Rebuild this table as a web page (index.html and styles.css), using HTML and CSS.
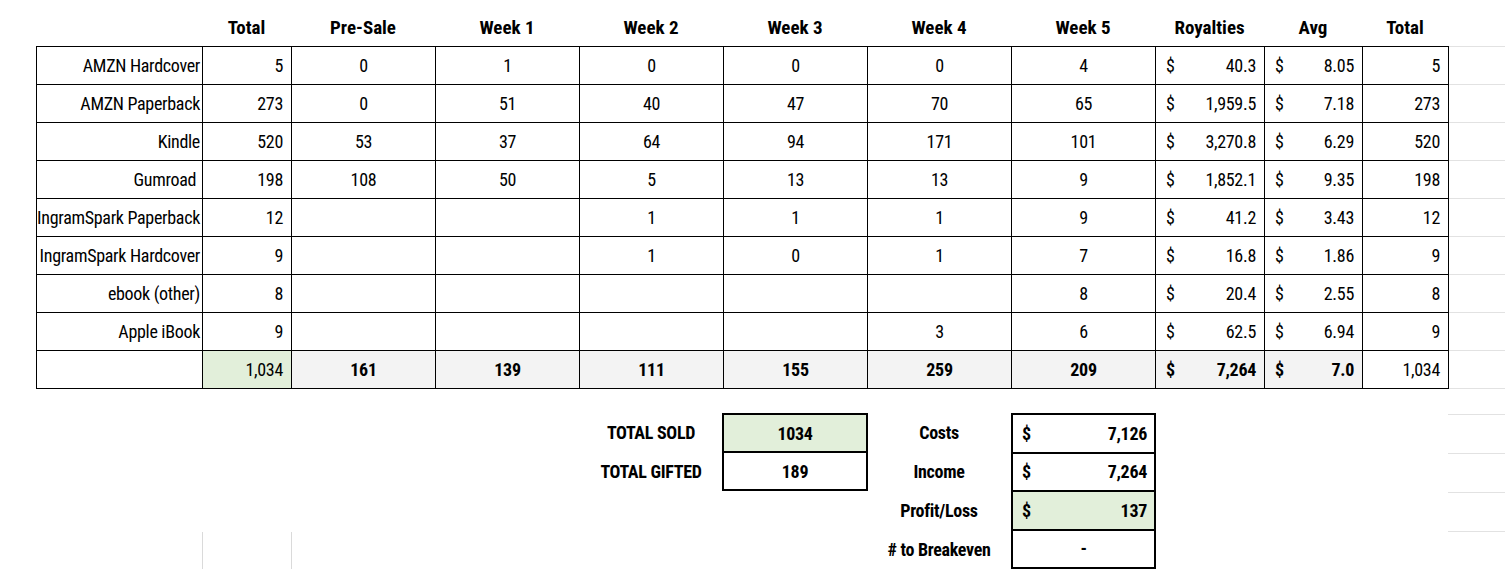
FILE: index.html
```html
<!DOCTYPE html>
<html>
<head>
<meta charset="utf-8">
<title>Book Sales</title>
<link rel="stylesheet" href="styles.css">
</head>
<body>
<div class="sheet">
  <div class="head">
    <div></div>
    <div>Total</div>
    <div>Pre-Sale</div>
    <div>Week 1</div>
    <div>Week 2</div>
    <div>Week 3</div>
    <div>Week 4</div>
    <div>Week 5</div>
    <div>Royalties</div>
    <div>Avg</div>
    <div>Total</div>
  </div>

  <div class="main">
    <div class="grid">
      <div class="c lbl">AMZN Hardcover</div><div class="c num">5</div><div class="c ctr">0</div><div class="c ctr">1</div><div class="c ctr">0</div><div class="c ctr">0</div><div class="c ctr">0</div><div class="c ctr">4</div><div class="c money"><span>$</span><span>40.3</span></div><div class="c money"><span>$</span><span>8.05</span></div><div class="c num">5</div>

      <div class="c lbl">AMZN Paperback</div><div class="c num">273</div><div class="c ctr">0</div><div class="c ctr">51</div><div class="c ctr">40</div><div class="c ctr">47</div><div class="c ctr">70</div><div class="c ctr">65</div><div class="c money"><span>$</span><span>1,959.5</span></div><div class="c money"><span>$</span><span>7.18</span></div><div class="c num">273</div>

      <div class="c lbl">Kindle</div><div class="c num">520</div><div class="c ctr">53</div><div class="c ctr">37</div><div class="c ctr">64</div><div class="c ctr">94</div><div class="c ctr">171</div><div class="c ctr">101</div><div class="c money"><span>$</span><span>3,270.8</span></div><div class="c money"><span>$</span><span>6.29</span></div><div class="c num">520</div>

      <div class="c lbl">Gumroad&nbsp;</div><div class="c num">198</div><div class="c ctr">108</div><div class="c ctr">50</div><div class="c ctr">5</div><div class="c ctr">13</div><div class="c ctr">13</div><div class="c ctr">9</div><div class="c money"><span>$</span><span>1,852.1</span></div><div class="c money"><span>$</span><span>9.35</span></div><div class="c num">198</div>

      <div class="c lbl">IngramSpark Paperback</div><div class="c num">12</div><div class="c ctr"></div><div class="c ctr"></div><div class="c ctr">1</div><div class="c ctr">1</div><div class="c ctr">1</div><div class="c ctr">9</div><div class="c money"><span>$</span><span>41.2</span></div><div class="c money"><span>$</span><span>3.43</span></div><div class="c num">12</div>

      <div class="c lbl">IngramSpark Hardcover</div><div class="c num">9</div><div class="c ctr"></div><div class="c ctr"></div><div class="c ctr">1</div><div class="c ctr">0</div><div class="c ctr">1</div><div class="c ctr">7</div><div class="c money"><span>$</span><span>16.8</span></div><div class="c money"><span>$</span><span>1.86</span></div><div class="c num">9</div>

      <div class="c lbl">ebook (other)</div><div class="c num">8</div><div class="c ctr"></div><div class="c ctr"></div><div class="c ctr"></div><div class="c ctr"></div><div class="c ctr"></div><div class="c ctr">8</div><div class="c money"><span>$</span><span>20.4</span></div><div class="c money"><span>$</span><span>2.55</span></div><div class="c num">8</div>

      <div class="c lbl">Apple iBook</div><div class="c num">9</div><div class="c ctr"></div><div class="c ctr"></div><div class="c ctr"></div><div class="c ctr"></div><div class="c ctr">3</div><div class="c ctr">6</div><div class="c money"><span>$</span><span>62.5</span></div><div class="c money"><span>$</span><span>6.94</span></div><div class="c num">9</div>

      <div class="c lbl"></div><div class="c num green">1,034</div><div class="c ctr sum">161</div><div class="c ctr sum">139</div><div class="c ctr sum">111</div><div class="c ctr sum">155</div><div class="c ctr sum">259</div><div class="c ctr sum">209</div><div class="c money sum"><span>$</span><span>7,264</span></div><div class="c money sum"><span>$</span><span>7.0</span></div><div class="c num">1,034</div>
    </div>
    <div class="rest"></div>
  </div>

  <div class="lower">
    <div class="blabel sold">TOTAL SOLD</div>
    <div class="blabel gifted">TOTAL GIFTED</div>
    <div class="box box-a">
      <div class="bc ctr green">1034</div>
      <div class="bc ctr">189</div>
    </div>
    <div class="blabel costs">Costs</div>
    <div class="blabel income">Income</div>
    <div class="blabel profit">Profit/Loss</div>
    <div class="blabel breakeven"># to Breakeven</div>
    <div class="box box-b">
      <div class="bc money"><span>$</span><span>7,126</span></div>
      <div class="bc money"><span>$</span><span>7,264</span></div>
      <div class="bc money green"><span>$</span><span>137</span></div>
      <div class="bc ctr">-</div>
    </div>
    <div class="faint"></div>
    <div class="rest-low"></div>
  </div>
</div>
</body>
</html>
```

FILE: styles.css
```css
* { box-sizing: border-box; }

body {
  margin: 0;
  background: #fff;
  color: #000;
  font-family: "Roboto Condensed", "DejaVu Sans Condensed", sans-serif;
  font-size: 18px;
  letter-spacing: -0.3px;
}

.sheet {
  padding: 8px 0 0 36px;
}

.head {
  display: grid;
  grid-template-columns: 166px 89px repeat(6, 144px) 109px 98px 86px;
  height: 38px;
  align-items: center;
  justify-items: center;
  font-weight: bold;
  font-size: 19px;
  letter-spacing: 0;
}

.main {
  display: flex;
}

.grid {
  display: grid;
  grid-template-columns: 165px 88px repeat(6, 143px) 108px 97px 85px;
  grid-auto-rows: 37px;
  gap: 1px;
  padding: 1px;
  background: #000;
}

.rest {
  flex: 1;
  height: 343px;
  background: repeating-linear-gradient(to bottom, #e2e2e2 0 1px, transparent 1px 38px);
}

.c {
  background: #fff;
  display: flex;
  align-items: center;
  white-space: nowrap;
}

.lbl { justify-content: flex-end; padding-right: 2px; }
.num { justify-content: flex-end; padding-right: 8px; }
.ctr { justify-content: center; }
.money { justify-content: space-between; padding: 0 8px 0 10px; }

.green { background: #e2efda; }
.sum { background: #f3f3f3; font-weight: bold; }

.lower {
  display: grid;
  grid-template-columns: 166px 89px repeat(6, 144px) 109px 98px 86px 1fr;
  grid-template-rows: 24px repeat(4, 39px);
}

.blabel {
  display: flex;
  align-items: center;
  justify-content: center;
  font-weight: bold;
  white-space: nowrap;
}
.sold { grid-column: 5; grid-row: 2; }
.gifted { grid-column: 5; grid-row: 3; }
.costs { grid-column: 7; grid-row: 2; }
.income { grid-column: 7; grid-row: 3; }
.profit { grid-column: 7; grid-row: 4; }
.breakeven { grid-column: 7; grid-row: 5; }

.box {
  border: 2px solid #000;
  display: flex;
  flex-direction: column;
  font-weight: bold;
}
.box-a { grid-column: 6; grid-row: 2 / 4; margin: 0 -1px 0 -1px; }
.box-b { grid-column: 8; grid-row: 2 / 6; margin-right: -1px; }

.bc {
  flex: 1 1 0;
  display: flex;
  align-items: center;
  border-bottom: 2px solid #000;
}
.bc:last-child { border-bottom: none; }
.box-b .money { padding: 0 7px 0 9px; }

.faint {
  grid-column: 2;
  grid-row: 5;
  margin: 2px -1px 0 0;
  border-left: 1px solid #dadada;
  border-right: 1px solid #dadada;
}

.rest-low {
  grid-column: 12;
  grid-row: 2 / 6;
  background: repeating-linear-gradient(to bottom, transparent 0 1px, #e2e2e2 1px 2px, transparent 2px 39px);
}
```
